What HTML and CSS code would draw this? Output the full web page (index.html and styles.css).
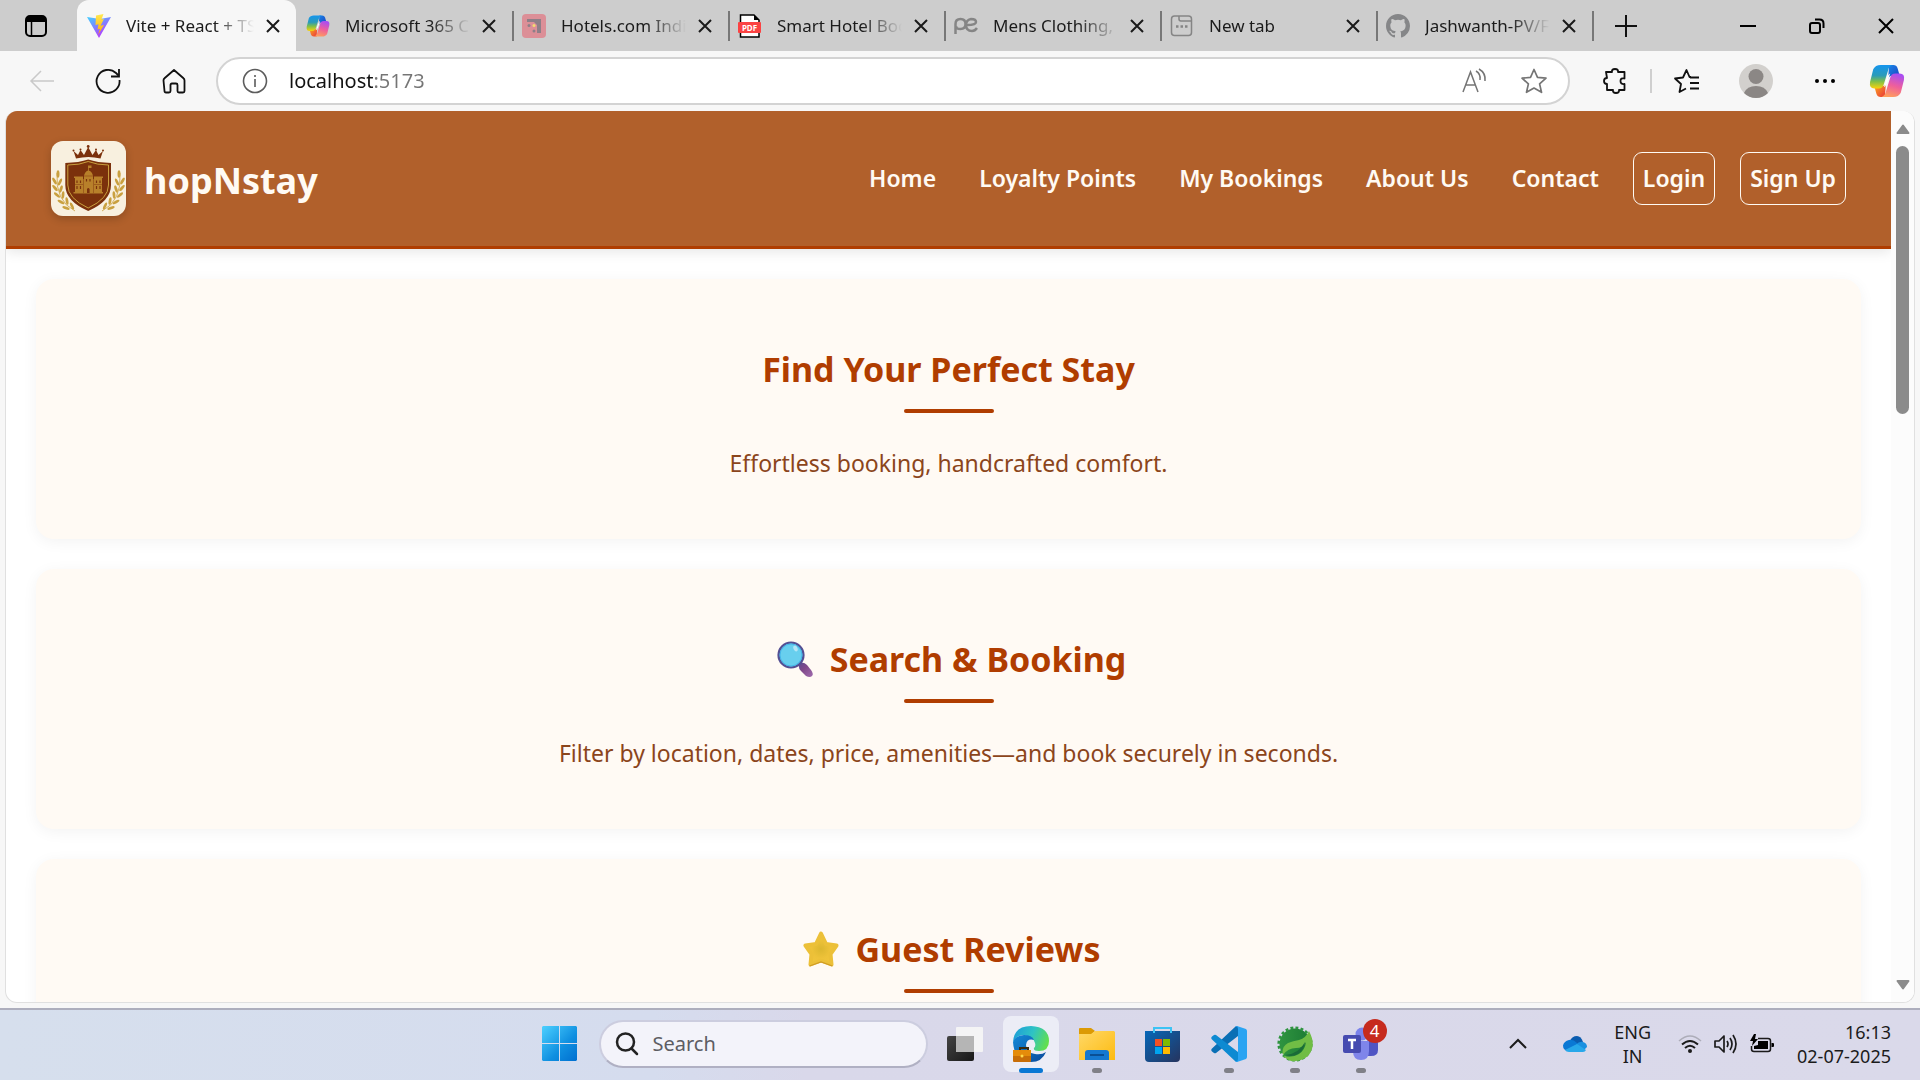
FILE: index.html
```html
<!DOCTYPE html>
<html lang="en">
<head>
<meta charset="utf-8">
<title>hopNstay</title>
<link rel="stylesheet" href="styles.css">
</head>
<body>
<svg class="defs" aria-hidden="true">
  <defs>
    <linearGradient id="cop-a" x1="0" y1="0" x2="0" y2="1"><stop offset="0" stop-color="#1595ee"/><stop offset=".45" stop-color="#2b9bb8"/><stop offset=".7" stop-color="#7fbf4a"/><stop offset="1" stop-color="#f8d20c"/></linearGradient>
    <linearGradient id="cop-b" x1="0.6" y1="0" x2="0.3" y2="1"><stop offset="0" stop-color="#a94df2"/><stop offset=".5" stop-color="#ef5f9b"/><stop offset="1" stop-color="#ffa05c"/></linearGradient>
    <linearGradient id="cop-c" x1="0" y1="0" x2="1" y2="1"><stop offset="0" stop-color="#1a86e8"/><stop offset="1" stop-color="#1a3fbf"/></linearGradient>
    <linearGradient id="cop-d" x1="0" y1="0" x2="1" y2="1"><stop offset="0" stop-color="#ffb21c"/><stop offset="1" stop-color="#e8343c"/></linearGradient>
    <linearGradient id="vite-a" x1="0" y1="0" x2=".6" y2="1"><stop offset="0" stop-color="#41d1ff"/><stop offset="1" stop-color="#bd34fe"/></linearGradient>
    <linearGradient id="vite-b" x1="0" y1="0" x2="0" y2="1"><stop offset="0" stop-color="#ffea53"/><stop offset="1" stop-color="#ffa800"/></linearGradient>
    <symbol id="copilot" viewBox="0 0 34 34">
      <path d="M19 2h4q3 0 4 3l2 7h-7q-3 0-4 3z" fill="url(#cop-c)"/>
      <path d="M15 32h-4q-3 0-4-3l-2-7h7q3 0 4-3z" fill="url(#cop-d)"/>
      <path d="M11 2h11q-3 1-4 5l-4 13q-1 4-5 4H5q-5 0-4-6l3-12q2-4 7-4z" fill="url(#cop-a)"/>
      <path d="M23 32H12q3-1 4-5l4-13q1-4 5-4h4q5 0 4 6l-3 12q-2 4-7 4z" fill="url(#cop-b)"/>
      <path d="M20 10q-2 1-3 4l-3 9q2-1 3-4z" fill="#fff"/>
    </symbol>
    <symbol id="cross" viewBox="0 0 14 14"><path d="M1 1l12 12M13 1L1 13" fill="none" stroke="#1a1a1a" stroke-width="2"/></symbol>
  </defs>
</svg>

<header class="tabstrip">
  <button class="workspace" aria-label="Tab actions">
    <svg width="22" height="22" viewBox="0 0 22 22"><rect x="1" y="1" width="20" height="20" rx="4" fill="none" stroke="#000" stroke-width="2"/><path d="M1 7V5a4 4 0 0 1 4-4h12a4 4 0 0 1 4 4v2z" fill="#000"/><path d="M6.500 6v15" stroke="#000" stroke-width="1.500"/></svg>
  </button>
  <div class="tab tab-active">
    <svg class="favicon" viewBox="0 0 24 24"><path d="M0 3l12 21L24 3l-11 2z" fill="url(#vite-a)"/><path d="M16.500 0L9 1.500 8.500 11l3-.7-1 5.200 2.500-.8L11 21l6-10-3.500.7L17 5l-2.500.4z" fill="url(#vite-b)"/></svg>
    <span class="tab-title">Vite + React + TS</span>
    <button class="tab-close" aria-label="Close tab"><svg><use href="#cross"/></svg></button>
  </div>
  <div class="tab tab-first">
    <svg class="favicon" viewBox="0 0 24 24"><use href="#copilot"/></svg>
    <span class="tab-title">Microsoft 365 Copilot</span>
    <button class="tab-close" aria-label="Close tab"><svg><use href="#cross"/></svg></button>
  </div>
  <div class="tab">
    <svg class="favicon" viewBox="0 0 24 24"><rect width="24" height="24" rx="4" fill="#dc8f97"/><path d="M5 7V5h14v14h-4v-8l-3-3H5z" fill="#8e7f88"/><circle cx="7" cy="11.500" r="1.500" fill="#8e7f88"/><circle cx="12" cy="11.500" r="1.500" fill="#f2dc70"/><circle cx="12" cy="17" r="1.500" fill="#8e7f88"/></svg>
    <span class="tab-title">Hotels.com India | Book</span>
    <button class="tab-close" aria-label="Close tab"><svg><use href="#cross"/></svg></button>
  </div>
  <div class="tab">
    <svg class="favicon" viewBox="0 0 24 24"><path d="M2.500 1h13.500l5 5v17h-18.500z" fill="#fff" stroke="#000" stroke-width="1.500"/><path d="M16 1v5h5z"/><rect y="8" width="23" height="11" rx="1" fill="#fb4343"/><text x="11.500" y="16.500" text-anchor="middle" class="pdf-mark">PDF</text></svg>
    <span class="tab-title">Smart Hotel Booking</span>
    <button class="tab-close" aria-label="Close tab"><svg><use href="#cross"/></svg></button>
  </div>
  <div class="tab">
    <svg class="favicon" viewBox="0 0 24 24" fill="none" stroke="#858585" stroke-width="2.500"><path d="M1.500 20V10q0-5 5-5t5 5-5 5-4-3M23 14q-2 3-5 3-6 0-6-6 0-5 5-6 5 0 5 3 0 3-9 3"/></svg>
    <span class="tab-title">Mens Clothing, Shirts</span>
    <button class="tab-close" aria-label="Close tab"><svg><use href="#cross"/></svg></button>
  </div>
  <div class="tab">
    <svg class="favicon" viewBox="0 0 24 24" fill="none" stroke="#858585" stroke-width="1.500"><rect x="1.500" y="2" width="20" height="19.500" rx="3"/><path d="M9 2v3q0 2 2 2h10"/><path d="M6 12.500h2.500m2 0H13m2 0h2.500" stroke-width="2.500"/></svg>
    <span class="tab-title">New tab</span>
    <button class="tab-close" aria-label="Close tab"><svg><use href="#cross"/></svg></button>
  </div>
  <div class="tab">
    <svg class="favicon" viewBox="0 0 24 24"><path fill="#858688" d="M12 0C5.400 0 0 5.400 0 12c0 5.300 3.400 9.800 8.200 11.400.6.100.8-.3.800-.6v-2c-3.300.7-4-1.600-4-1.600-.6-1.400-1.400-1.800-1.400-1.800-1-.7.100-.7.100-.7 1.200 0 1.900 1.200 1.900 1.200 1 1.800 2.800 1.300 3.500 1 0-.8.400-1.300.7-1.600-2.700-.3-5.500-1.300-5.500-6 0-1.200.5-2.300 1.300-3.100-.2-.4-.6-1.600 0-3.200 0 0 1-.3 3.400 1.200a11.500 11.500 0 0 1 6 0c2.300-1.500 3.300-1.200 3.300-1.200.6 1.600.2 2.800 0 3.200.9.800 1.300 1.900 1.300 3.200 0 4.600-2.800 5.600-5.500 5.900.5.400.9 1 .9 2.200v3.300c0 .3.100.7.800.6A12 12 0 0 0 24 12c0-6.600-5.400-12-12-12z"/></svg>
    <span class="tab-title">Jashwanth-PV/Front</span>
    <button class="tab-close" aria-label="Close tab"><svg><use href="#cross"/></svg></button>
  </div>
  <button class="new-tab" aria-label="New tab"><svg width="22" height="22" viewBox="0 0 22 22"><path d="M11 0v22M0 11h22" stroke="#111" stroke-width="2"/></svg></button>
  <div class="window-controls">
    <button aria-label="Minimize"><svg width="16" height="16" viewBox="0 0 16 16"><path d="M0 8h16" stroke="#000" stroke-width="2"/></svg></button>
    <button aria-label="Restore"><svg width="16" height="16" viewBox="0 0 16 16" fill="none" stroke="#000" stroke-width="2"><rect x="1" y="5" width="10" height="10" rx="2"/><path d="M6 1.500h4.500q4 0 4 4V10"/></svg></button>
    <button aria-label="Close"><svg width="16" height="16" viewBox="0 0 16 16"><path d="M1 1l14 14M15 1L1 15" stroke="#000" stroke-width="2"/></svg></button>
  </div>
</header>

<div class="toolbar">
  <button class="tool" aria-label="Back"><svg width="26" height="24" viewBox="0 0 26 24" fill="none" stroke="#c9c9c9" stroke-width="1.500"><path d="M25 12H2M12 2L2 12l10 10"/></svg></button>
  <button class="tool" aria-label="Refresh"><svg width="26" height="26" viewBox="0 0 26 26" fill="none" stroke="#111" stroke-width="1.800"><path d="M24.500 12A11.500 11.500 0 1 1 21 5l2.500 2.500"/><path d="M24 1v7.500h-8"/></svg></button>
  <button class="tool" aria-label="Home"><svg width="24" height="26" viewBox="0 0 24 26" fill="none" stroke="#111" stroke-width="1.800" stroke-linejoin="round"><path d="M1.500 12.500q0-1.500 1-2.300L12 2l9.500 8.200q1 .8 1 2.300V23q0 1.500-1.500 1.500h-4q-1.500 0-1.500-1.500v-6q0-1.500-1.500-1.500h-4q-1.500 0-1.500 1.500v6q0 1.500-1.500 1.500h-3q-1.500 0-1.500-1.500z"/></svg></button>
  <div class="address">
    <svg width="26" height="26" viewBox="0 0 26 26" fill="none" stroke="#5c5c5c" stroke-width="1.600"><circle cx="13" cy="13" r="11.500"/><path d="M13 11v8M13 7v2"/></svg>
    <input class="url" type="text" value="localhost:5173" aria-label="Address">
    <button class="address-tool" aria-label="Read aloud"><svg width="26" height="26" viewBox="0 0 26 26" fill="none" stroke="#757575" stroke-width="1.500"><path d="M1 24L8.500 4 16 24M4 17h9M14 3q5 3 4 9M17 1q7 4 6 12"/></svg></button>
    <button class="address-tool" aria-label="Add to favorites"><svg width="26" height="26" viewBox="0 0 26 26" fill="none" stroke="#757575" stroke-width="1.700" stroke-linejoin="round"><path d="M13 1.500l3.500 7.800 8.500.9-6.400 5.700 1.900 8.400-7.500-4.300-7.500 4.300 1.900-8.400L1 10.200l8.500-.9z"/></svg></button>
  </div>
  <button class="tool" aria-label="Extensions"><svg width="24" height="26" viewBox="0 0 24 26" fill="none" stroke="#111" stroke-width="1.800" stroke-linejoin="round"><path d="M3 4h6q-.5-3 3-3t3 3h6.500v6.500q-4-1-4 2.500t4 3V22H16q.5 3-3 3t-3-3H4v-6q-3 0-3-3t3-3z"/></svg></button>
  <span class="tool-divider"></span>
  <button class="tool tool-wide" aria-label="Favorites"><svg width="26" height="26" viewBox="0 0 26 26" fill="none" stroke="#111" stroke-width="1.800" stroke-linejoin="round"><path d="M17 9l-1.500 0L12.500 2 9 9.500 1 10.500l6 5.500-1.500 8L12 20.500M16 9.500h9M16 15h9M16 20.500h9"/></svg></button>
  <button class="tool tool-wide" aria-label="Profile"><svg width="34" height="34" viewBox="0 0 34 34"><circle cx="17" cy="17" r="17" fill="#d2d0cd"/><circle cx="17" cy="12.500" r="7.500" fill="#8b8785"/><path d="M5 29q3-7 12-7t12 7q-5 5-12 5T5 29z" fill="#8b8785"/></svg></button>
  <button class="tool tool-wide" aria-label="More"><svg width="22" height="6" viewBox="0 0 22 6"><circle cx="3" cy="3" r="2"/><circle cx="11" cy="3" r="2"/><circle cx="19" cy="3" r="2"/></svg></button>
  <button class="tool tool-copilot" aria-label="Copilot"><svg width="36" height="36"><use href="#copilot"/></svg></button>
</div>

<div class="viewport">
  <div class="site">
    <div class="site-header">
      <div class="brand">
        <svg class="logo" viewBox="0 0 75 75">
          <defs>
            <g id="laurel" fill="#c9a03f"><path d="M24 70Q4 60 6 32" fill="none" stroke="#c9a03f" stroke-width=".8"/>
              <ellipse cx="7" cy="33" rx="1.500" ry="3.800"/><ellipse cx="3.500" cy="40" rx="1.400" ry="3.800" transform="rotate(-30 3.500 40)"/><ellipse cx="9" cy="41" rx="1.400" ry="3.800" transform="rotate(25 9 41)"/><ellipse cx="4" cy="47" rx="1.400" ry="3.800" transform="rotate(-40 4 47)"/><ellipse cx="10" cy="48" rx="1.400" ry="3.800" transform="rotate(18 10 48)"/><ellipse cx="6" cy="54" rx="1.400" ry="3.800" transform="rotate(-48 6 54)"/><ellipse cx="12" cy="54" rx="1.400" ry="3.800" transform="rotate(5 12 54)"/><ellipse cx="10" cy="61" rx="1.400" ry="3.800" transform="rotate(-60 10 61)"/><ellipse cx="16" cy="60" rx="1.400" ry="3.800" transform="rotate(-10 16 60)"/><ellipse cx="15" cy="67" rx="1.400" ry="3.800" transform="rotate(-72 15 67)"/><ellipse cx="21" cy="65" rx="1.400" ry="3.800" transform="rotate(-25 21 65)"/></g>
          </defs>
          <rect width="75" height="75" fill="#f8f0df"/>
          <use href="#laurel"/><use href="#laurel" transform="translate(75 0) scale(-1 1)"/>
          <g fill="#7b310c"><path d="M25 17.500L22.500 10l4.500 4 2.500-5 3.500 5L37.200 6l4.300 8L45 9l2.500 5 4.500-4-2.500 7.500q-12-3-24.500 0z"/><circle cx="37.200" cy="5.500" r="1.400"/><circle cx="29.500" cy="8.500" r="1"/><circle cx="45" cy="8.500" r="1"/><circle cx="22.500" cy="9.500" r="1"/><circle cx="52" cy="9.500" r="1"/>
          <path d="M14.300 22q14-.5 22.900-3.500Q46 21.500 60 22v22q0 16-22.800 26Q14.300 60 14.300 44z"/></g>
          <path d="M16.800 24q12 0 20.400-3.500 9 3.500 20.300 3.500v20q0 13.500-20.300 23-20.400-9.500-20.400-23z" fill="none" stroke="#c9a03f"/>
          <g fill="#b8802a"><path d="M37 24.500h3.500v2.500h-2.700v2.500q3.500 1 4.200 5.500v17h-9V35q.7-4.500 4-5.500z"/><path d="M24 36h8v16h-8zM43 36h8v16h-8zM32 38h11v14H32z"/><path d="M23 35.500h9v1.500h-9zM43 35.500h9v1.500h-9zM22.500 51h29.500v1.500H22.500z"/></g>
          <path d="M26 39.500v2.500m3.500-2.500v2.500m16-2.500v2.500m3.500-2.500v2.500M26 45v3m3.500-3v3m16-3v3m3.500-3v3M35.500 38v2.500m3.500-2.500v2.500" stroke="#7b310c" stroke-width="1.200"/><path d="M32.500 38v14M42.500 38v14M33 35h9M24 43.500h8M43 43.500h8" stroke="#8d4514" stroke-width=".6"/><path d="M36 52v-4q1.300-2 2.600 0v4z" fill="#7b310c"/>
        </svg>
        <span class="brand-name">hopNstay</span>
      </div>
      <nav class="site-nav">
        <a href="#">Home</a>
        <a href="#">Loyalty Points</a>
        <a href="#">My Bookings</a>
        <a href="#">About Us</a>
        <a href="#">Contact</a>
        <a class="boxed" href="#">Login</a>
        <a class="boxed" href="#">Sign Up</a>
      </nav>
    </div>
    <main class="cards">
      <section class="card">
        <h2>Find Your Perfect Stay</h2>
        <p>Effortless booking, handcrafted comfort.</p>
      </section>
      <section class="card">
        <h2><svg width="36" height="36" viewBox="0 0 36 36"><defs><linearGradient id="handle" x1="0" y1="0" x2="1" y2="1"><stop offset="0" stop-color="#5d4a90"/><stop offset=".4" stop-color="#80488a"/><stop offset="1" stop-color="#a06cae"/></linearGradient></defs><path d="M22 23l2-1q3-1 6 2l4 5q3 4 1 6t-6 0l-5-5q-3-3-2-7z" fill="url(#handle)"/><circle cx="14" cy="14" r="12.500" fill="#68cfee" stroke="#534f93" stroke-width="2.200"/><circle cx="14" cy="14" r="11" fill="none" stroke="#45b5e8" stroke-width="1"/><ellipse cx="18.500" cy="7.500" rx="2" ry="3" transform="rotate(-25 18.500 7.500)" fill="#b4e6f6"/></svg>Search &amp; Booking</h2>
        <p>Filter by location, dates, price, amenities—and book securely in seconds.</p>
      </section>
      <section class="card">
        <h2><svg width="36" height="36" viewBox="0 0 36 36"><defs><radialGradient id="gold"><stop offset="0" stop-color="#dcb72f"/><stop offset=".6" stop-color="#eec239"/><stop offset="1" stop-color="#f0c53c"/></radialGradient></defs><path d="M18 2.500l5 10.500 10.500 1.500-6 8.500 1 10.500L18 29.500 7.500 33.500l1-10.500-6-8.500L13 13z" fill="url(#gold)" stroke="#ecc038" stroke-width="4" stroke-linejoin="round"/><path d="M29.500 35L18 31 6.500 35" fill="none" stroke="#cf9c26" stroke-width="1.200"/></svg>Guest Reviews</h2>
        <p>Read real stories from real travellers.</p>
      </section>
    </main>
  </div>
  <div class="scrollbar">
    <svg width="14" height="10" viewBox="0 0 14 10"><path d="M7 1.500l5.500 7.500h-11z" fill="#8b8b8b" stroke="#8b8b8b" stroke-width="2" stroke-linejoin="round"/></svg>
    <span class="thumb"></span>
    <svg width="14" height="10" viewBox="0 0 14 10"><path d="M7 8.500L12.500 1h-11z" fill="#8b8b8b" stroke="#8b8b8b" stroke-width="2" stroke-linejoin="round"/></svg>
  </div>
</div>

<footer class="taskbar">
  <div class="task-center">
    <button class="task" aria-label="Start"><svg width="36" height="36" viewBox="0 0 36 36"><defs><linearGradient id="win" x1="0" y1="0" x2="1" y2="1"><stop offset="0" stop-color="#4cd0ff"/><stop offset=".6" stop-color="#0f8fe0"/><stop offset="1" stop-color="#006fd0"/></linearGradient></defs><path fill="url(#win)" d="M1 0h16v17H0V1zM18 0h16l1 1v16H18zM0 18h17v17H1l-1-1zM18 18h17v16l-1 1H18z"/></svg></button>
    <label class="task-search">
      <svg width="24" height="24" viewBox="0 0 24 24" fill="none" stroke="#222" stroke-width="2.500" stroke-linecap="round"><circle cx="10.500" cy="10" r="8.500"/><path d="M16.500 16.500L22 22"/></svg>
      <input type="search" placeholder="Search" aria-label="Search">
    </label>
    <button class="task" aria-label="Task view"><svg width="36" height="36" viewBox="0 0 36 36"><defs><linearGradient id="tv" x1="0" y1="0" x2="1" y2="1"><stop offset="0" stop-color="#444"/><stop offset="1" stop-color="#181818"/></linearGradient></defs><rect y="10" width="27" height="25" rx="2" fill="url(#tv)"/><rect x="9" y="1" width="27" height="25" rx="1" fill="#f6f6f6" opacity=".95"/><path d="M9 10h18v16H10l-1-1z" fill="#b5b5b5"/></svg></button>
    <button class="task task-current" aria-label="Edge"><svg width="36" height="36" viewBox="0 0 36 36"><defs><linearGradient id="ed1" x1="0" y1=".3" x2="1" y2=".6"><stop offset="0" stop-color="#1d9fd8"/><stop offset=".5" stop-color="#2fc3c4"/><stop offset="1" stop-color="#64e04a"/></linearGradient><linearGradient id="ed2" x1="0" y1="0" x2="1" y2="1"><stop offset="0" stop-color="#1389d8"/><stop offset="1" stop-color="#0b4a9a"/></linearGradient></defs><path d="M0 16Q1 0 18 0q18 1 18 15 0 10-10 10-6 0-5-3 2-2 1-5-2-7-11-8Q4 9 0 16z" fill="url(#ed1)"/><path d="M0 16Q3 9 11 9q8 0 10 5-7-2-8 5 0 8 9 9 7 1 11-2-4 10-15 10Q1 35 0 16z" fill="url(#ed2)"/><path d="M7 24v-2h8v2" fill="none" stroke="#3a2a10" stroke-width="2"/><rect y="24" width="18" height="12" rx="1" fill="#c86e08"/><path d="M0 24h18v6H0z" fill="#e58c0b"/><circle cx="9" cy="30" r="1.500" fill="#ffd94a"/></svg></button>
    <button class="task task-open" aria-label="File Explorer"><svg width="36" height="36" viewBox="0 0 36 36"><defs><linearGradient id="fo" x1="0" y1="0" x2="1" y2="1"><stop offset="0" stop-color="#ffd868"/><stop offset="1" stop-color="#fdbb10"/></linearGradient></defs><path d="M0 3q0-1 1-1h11l4 3-4 4H0z" fill="#dc9a04"/><path d="M0 8h12l4-3h19l1 1v28H0z" fill="url(#fo)"/><path d="M6 34v-7q0-3 3-3h18q3 0 3 3v7z" fill="#1478d0"/><path d="M11 29h14" stroke="#0a4f94" stroke-width="2"/></svg></button>
    <button class="task" aria-label="Store"><svg width="36" height="36" viewBox="0 0 36 36"><defs><linearGradient id="st" x1="0" y1="0" x2="1" y2="1"><stop offset="0" stop-color="#0667b8"/><stop offset="1" stop-color="#26345e"/></linearGradient></defs><path d="M9 8V2h17v6" fill="none" stroke="#3cc3f4" stroke-width="2"/><path d="M0 5h35v27q0 4-4 4H4q-4 0-4-4z" fill="url(#st)"/><path d="M9 7V2M26 7V2" stroke="#3cc3f4" stroke-width="2"/><path d="M10 13h7v7h-7z" fill="#f25022"/><path d="M18 13h7v7h-7z" fill="#7fba00"/><path d="M10 21h7v7h-7z" fill="#00a4ef"/><path d="M18 21h7v7h-7z" fill="#ffb900"/></svg></button>
    <button class="task task-open" aria-label="Visual Studio Code"><svg width="36" height="36" viewBox="0 0 36 36"><path d="M1 22.500q-1.500 1.500 0 3L3 27q1 .7 2 0L27 10V1q-1-2-3 0z" fill="#0a6fb5"/><path d="M1 13.500q-1.500-1.500 0-3L3 9q1-.7 2 0l22 17v9q-1 2-3 0z" fill="#0d8ad2"/><path d="M26 0l9 3q1 1 1 2v26q0 1-1 2l-9 3q-1.500 0-2-1 3 1 3-2V3q0-3-3-2 .8-1 2-1z" fill="#2aa4f2"/></svg></button>
    <button class="task task-open" aria-label="Spring Tools"><svg width="36" height="36" viewBox="0 0 36 36"><defs><linearGradient id="sp" x1="0" y1="0" x2="1" y2="0"><stop offset="0" stop-color="#2f9440"/><stop offset="1" stop-color="#1c7a34"/></linearGradient></defs><circle cx="18" cy="18" r="15.500" fill="url(#sp)"/><circle cx="18" cy="18" r="16.300" fill="none" stroke="#2f9440" stroke-width="2.600" stroke-dasharray="2.900 2.220"/><path d="M32 5q8 15-1 25-7 6-17 5-5-2-8-5 10 2 16-2 6-4 7-12-3 6-10 6-8 0-13 7-2-8 5-12 5-2 11-3 7-2 10-9z" fill="#70bd45"/><path d="M8 29q14-1 20-13-2 13-14 14-3 0-6-1z" fill="#1b6b38"/></svg></button>
    <button class="task task-open" aria-label="Teams"><svg width="36" height="36" viewBox="0 0 36 36"><circle cx="28" cy="11" r="5" fill="#5059c9"/><path d="M20 15h14q1 0 1 2v7q0 6-7 6h-5z" fill="#4f55c4"/><circle cx="19" cy="8" r="6.500" fill="#7b83eb"/><path d="M10 15h16v10q0 9-8 9t-8-9z" fill="#7f85ea"/><rect y="9" width="18" height="18" rx="2" fill="#464bb0"/><path d="M5 14h8M9 14v9" stroke="#fff" stroke-width="2.500"/></svg><span class="badge">4</span></button>
  </div>
  <div class="tray">
    <button aria-label="Show hidden icons"><svg width="18" height="12" viewBox="0 0 18 12"><path d="M1 10l8-8 8 8" fill="none" stroke="#1b1b1b" stroke-width="2"/></svg></button>
    <button class="cloud" aria-label="OneDrive"><svg width="24" height="16" viewBox="0 0 24 16"><path d="M7 5q2-5 7-5 4 0 6 6l-6 3z" fill="#0a5cb0"/><path d="M5 15Q0 14 0 9.500 1 5 6 4q4-1 8 3l6 4-8 5z" fill="#0a78d4"/><path d="M13 9q3-4 7-3 4 1 4 5l-3 3z" fill="#1a90e0"/><path d="M2 14l12-6 9 6q-1 2-3 2H6q-3 0-4-2z" fill="#28a8ea"/></svg></button>
    <button class="lang" aria-label="Language">ENG<br>IN</button>
    <button class="status" aria-label="Network, volume and battery">
      <svg width="24" height="20" viewBox="0 0 24 20" fill="none" stroke="#1b1b1b" stroke-width="2"><path d="M1 7q11-10 22 0" stroke="#adadb9" stroke-width="1.500"/><path d="M4 10.500q8-7 16 0M7 14q5-4.500 10 0"/><circle cx="12" cy="17" r="2" fill="#1b1b1b" stroke="none"/></svg>
      <svg width="24" height="20" viewBox="0 0 24 20" fill="none" stroke="#1b1b1b" stroke-width="1.700" stroke-linejoin="round"><path d="M1 7h4l5-5v16l-5-5H1zM13 7q2 3 0 6M16 4q4 6 0 12M19 1q6 9 0 18"/></svg>
      <svg width="24" height="20" viewBox="0 0 24 20"><path d="M8 4.500h10q2.500 0 2.500 2.500v8q0 2.500-2.500 2.500H4Q1.500 17.500 1.500 15v-3" fill="none" stroke="#1b1b1b" stroke-width="1.500"/><path d="M8 7h10v8H4v-3l4-1zM21.500 9h1.500q1 0 1 1v2q0 1-1 1h-1.500z"/><path d="M4 0L0 7h3l-1 5 6-7H5l1-5z"/></svg>
    </button>
    <button class="clock" aria-label="Clock">16:13<br>02-07-2025</button>
  </div>
</footer>
</body>
</html>
```
FILE: styles.css
```css
* { box-sizing: border-box; }

body {
  margin: 0;
  height: 100vh;
  display: flex;
  flex-direction: column;
  overflow: hidden;
  background: #f7f7f7;
  color: #1b1b1b;
  font-family: "Noto Sans", "Open Sans", sans-serif;
}

button {
  margin: 0;
  padding: 0;
  border: 0;
  background: none;
  color: inherit;
  font: inherit;
  display: flex;
  align-items: center;
  justify-content: center;
}

svg { display: block; flex: none; }
.defs { position: absolute; width: 0; height: 0; }

/* Tab strip */
.tabstrip {
  flex: none;
  display: flex;
  height: 51px;
  background: #cdcdcd;
}
.workspace { width: 77px; padding-right: 5px; }
.tab {
  flex: 0 1 216px;
  min-width: 0;
  display: flex;
  align-items: center;
  padding: 0 4px 0 10px;
  background: linear-gradient(#777, #777) left 0 center / 2px 30px no-repeat;
}
.tab-active { flex-basis: 219px; background: #f7f7f7; border-radius: 12px 12px 0 0; }
.tab-first { background: none; }
.favicon { width: 24px; height: 24px; margin-right: 15px; }
.pdf-mark { fill: #fff; font-size: 8px; font-weight: 700; }
.tab-title {
  flex: 1;
  min-width: 0;
  overflow: hidden;
  white-space: nowrap;
  font-size: 17px;
  line-height: 24px;
  -webkit-mask-image: linear-gradient(90deg, #000 calc(100% - 40px), transparent);
  mask-image: linear-gradient(90deg, #000 calc(100% - 40px), transparent);
}
.tab-close { width: 38px; height: 38px; }
.tab-close svg { width: 14px; height: 14px; }
.new-tab {
  width: 68px;
  background: linear-gradient(#777, #777) left 0 center / 2px 30px no-repeat;
}
.window-controls { display: flex; margin-left: auto; }
.window-controls button { width: 69px; }

/* Toolbar */
.toolbar {
  flex: none;
  display: flex;
  align-items: center;
  height: 60px;
  padding: 0 5px 0 9px;
}
.tool { width: 66px; height: 44px; }
.tool-wide { width: 69px; }
.tool-copilot { width: 56px; }
.tool-divider { width: 2px; height: 24px; margin-left: 2px; background: #cfcfcf; }
.address {
  flex: 1;
  display: flex;
  align-items: center;
  height: 48px;
  margin: 0 12px 0 9px;
  padding: 0 5px 0 24px;
  border: 2px solid #d3d3d3;
  border-radius: 24px;
  background: #fff;
}
.url {
  flex: 1;
  min-width: 0;
  margin-left: 21px;
  padding: 0;
  border: 0;
  outline: 0;
  font: 20px/28px "Noto Sans", "Open Sans", sans-serif;
  color: transparent;
  background: linear-gradient(90deg, #111 85px, #757575 85px);
  -webkit-background-clip: text;
  background-clip: text;
}
.address-tool { width: 59px; height: 40px; }

/* Page area */
.viewport {
  flex: 1;
  min-height: 0;
  display: flex;
  margin: 0 5px 5px;
  border: 1px solid #e0e0e0;
  border-top: 0;
  border-radius: 12px;
  overflow: hidden;
  background: #fff;
}
.site { flex: 1; min-width: 0; overflow: hidden; }
.site-header {
  display: flex;
  align-items: center;
  justify-content: space-between;
  padding: 30px 45px;
  background: #b1602b;
  border-bottom: 3px solid #b03d00;
  box-shadow: 0 3px 12px rgba(0, 0, 0, .1);
}
.brand { display: flex; align-items: center; gap: 18px; }
.logo {
  width: 75px;
  height: 75px;
  border-radius: 12px;
  box-shadow: 0 3px 9px rgba(0, 0, 0, .2);
}
.brand-name {
  padding-top: 4px;
  font-size: 36px;
  line-height: 48px;
  font-weight: 700;
  color: #fffaf3;
}
.site-nav { display: flex; align-items: center; gap: 25px; }
.site-nav a {
  padding: 9px;
  font-size: 23px;
  line-height: 33px;
  font-weight: 600;
  color: #fffaf3;
  text-decoration: none;
  white-space: nowrap;
}
.site-nav .boxed { border: 1px solid #fffaf3; border-radius: 9px; }

.cards { display: flex; flex-direction: column; gap: 30px; padding: 30px; }
.card {
  padding: 60px 60px 58px;
  border-radius: 18px;
  background: #fffaf4;
  box-shadow: 0 3px 15px rgba(0, 0, 0, .05);
  text-align: center;
}
.card h2 {
  display: flex;
  align-items: center;
  justify-content: center;
  gap: 17px;
  margin: 0;
  font-size: 34px;
  line-height: 60px;
  font-weight: 700;
  color: #b03d00;
}
.card h2 svg { margin-left: 6px; }
.card p {
  margin: 0;
  font-size: 23px;
  line-height: 36px;
  color: #8b451b;
}
.card p::before {
  content: "";
  display: block;
  width: 90px;
  height: 4px;
  margin: 10px auto 32px;
  border-radius: 2px;
  background: #b03d00;
}

.scrollbar {
  flex: none;
  display: flex;
  flex-direction: column;
  align-items: center;
  width: 23px;
  padding: 13px 0 12px;
  background: #fcfcfc;
}
.thumb {
  width: 13px;
  height: 31%;
  margin: 12px 0 auto;
  border-radius: 7px;
  background: #8b8b8b;
}

/* Taskbar */
.taskbar {
  flex: none;
  display: grid;
  grid-template-columns: 1fr auto 1fr;
  height: 72px;
  padding-bottom: 2px;
  border-top: 2px solid #adaebd;
  background: linear-gradient(90deg, #d6dfed, #d5dcee 34%, #d9d8ea 42%, #dad9ea);
}
.task-center { grid-column: 2; display: flex; align-items: center; }
.task { position: relative; width: 66px; height: 56px; }
.task-current { width: 56px; margin: 0 5px; border-radius: 8px; background: #ecedf6; }
.task-open::after,
.task-current::after {
  content: "";
  position: absolute;
  bottom: -1px;
  left: calc(50% - 5px);
  width: 10px;
  height: 5px;
  border-radius: 3px;
  background: #808088;
}
.task-current::after { left: calc(50% - 12px); width: 24px; background: #0a78d4; }
.badge {
  position: absolute;
  top: 3px;
  right: 7px;
  width: 24px;
  height: 24px;
  border-radius: 12px;
  background: #c62b1e;
  color: #fff;
  font-size: 17px;
  line-height: 24px;
  text-align: center;
}
.task-search {
  display: flex;
  align-items: center;
  gap: 14px;
  width: 329px;
  height: 48px;
  margin: 0 4px 0 6px;
  padding: 0 14px;
  border: 2px solid #cccddf;
  border-bottom-color: #b0b0c3;
  border-radius: 24px;
  background: #f3f3fa;
}
.task-search input {
  width: 100%;
  padding: 0;
  border: 0;
  outline: 0;
  background: none;
  font: 20px/28px "Noto Sans", "Open Sans", sans-serif;
}
.task-search input::placeholder { color: #5d5d63; opacity: 1; }

.tray {
  display: flex;
  align-items: center;
  justify-content: flex-end;
  padding-right: 29px;
  font-size: 18px;
  line-height: 24px;
}
.cloud { margin: 0 27px 0 36px; }
.lang { display: block; text-align: center; }
.status { gap: 12px; margin: 0 23px 0 27px; }
.clock { display: block; text-align: right; }
```
